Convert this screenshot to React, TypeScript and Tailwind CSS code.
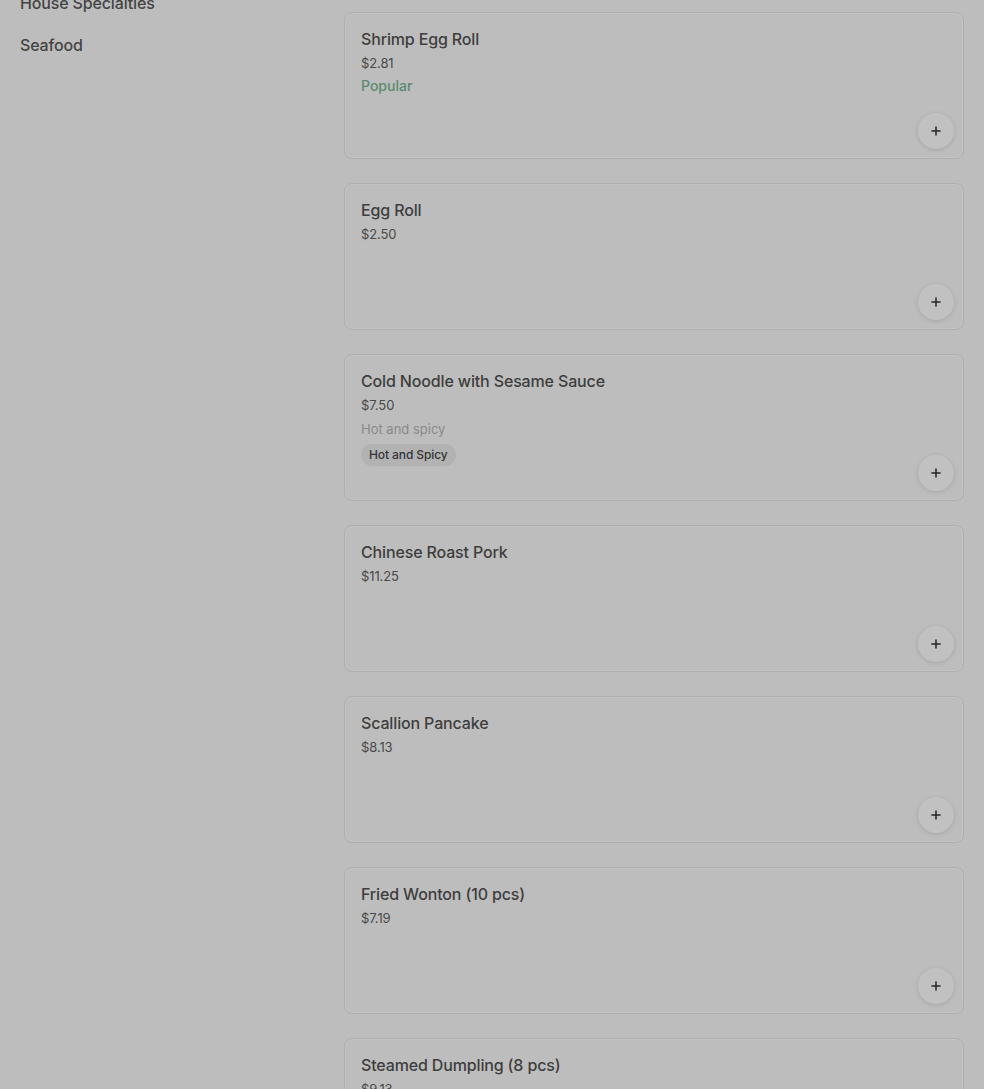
import { Plus } from "lucide-react";

type Item = {
  name: string;
  price: string;
  popular?: boolean;
  desc?: string;
  tag?: string;
};

const items: Item[] = [
  { name: "Shrimp Egg Roll", price: "$2.81", popular: true },
  { name: "Egg Roll", price: "$2.50" },
  { name: "Cold Noodle with Sesame Sauce", price: "$7.50", desc: "Hot and spicy", tag: "Hot and Spicy" },
  { name: "Chinese Roast Pork", price: "$11.25" },
  { name: "Scallion Pancake", price: "$8.13" },
  { name: "Fried Wonton (10 pcs)", price: "$7.19" },
  { name: "Steamed Dumpling (8 pcs)", price: "$9.13" },
];

function MenuCard({ item }: { item: Item }) {
  return (
    <div className="flex flex-col h-[147px] shrink-0 rounded-lg border border-[#afafaf] bg-[#bdbdbd] pt-[15px] pl-4 pr-[9px] pb-[9px] shadow-[inset_0_0_0_1px_#c3c3c3]">
      <div className="flex-1 min-h-0 flex flex-col items-start">
        <div className="text-[16px] leading-[22px] font-medium tracking-[-0.15px] text-[#3e3e3e]">{item.name}</div>
        <div className="mt-[3px] text-[13px] leading-[20px] tracking-[-0.1px] text-[#4a4a4a]">{item.price}</div>
        {item.popular && (
          <div className="mt-[3px] text-[14px] leading-[20px] font-medium text-[#5c8a70]">Popular</div>
        )}
        {item.desc && (
          <div className="mt-[4px] text-[13px] leading-[20px] text-[#8a8a8a]">{item.desc}</div>
        )}
        {item.tag && (
          <div className="mt-[5px] shrink-0 rounded-full bg-[#b2b2b2] px-2 text-[12px] leading-[22px] font-medium tracking-[-0.1px] text-[#343434]">
            {item.tag}
          </div>
        )}
      </div>
      <button className="self-end shrink-0 flex items-center justify-center w-9 h-9 rounded-full bg-[#c1c1c1] shadow-[0_1px_5px_rgba(0,0,0,0.12)]">
        <Plus className="w-[14px] h-[14px] text-[#252525]" strokeWidth={2.6} />
      </button>
    </div>
  );
}

export default function App() {
  return (
    <div
      className="w-full h-[1089px] overflow-hidden bg-[#bdbdbd] flex"
      style={{ fontFamily: "Inter, Roboto, 'Noto Sans', sans-serif" }}
    >
      <aside className="w-[344px] shrink-0 pl-5 -mt-[9px]">
        <div className="flex flex-col gap-[18px]">
          <div className="text-[16px] leading-[24px] font-medium tracking-[-0.15px] text-[#444444]">House Specialties</div>
          <div className="text-[16px] leading-[24px] font-medium tracking-[-0.15px] text-[#444444]">Seafood</div>
        </div>
      </aside>
      <main className="flex-1 pr-5">
        <div className="flex flex-col gap-6 pt-3 border-t border-[#b5b5b5] -mt-px">
          {items.map((it) => (
            <MenuCard key={it.name} item={it} />
          ))}
        </div>
      </main>
    </div>
  );
}
